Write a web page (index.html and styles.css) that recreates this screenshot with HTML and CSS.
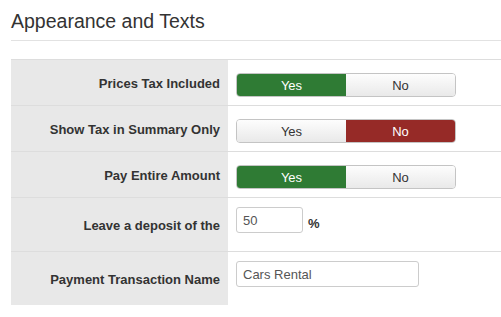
FILE: index.html
```html
<!DOCTYPE html>
<html>
<head>
<meta charset="utf-8">
<link rel="stylesheet" href="styles.css">
</head>
<body>
<div class="page">
  <h2 class="title">Appearance and Texts</h2>
  <div class="form">
    <div class="row">
      <div class="label">Prices Tax Included</div>
      <div class="field">
        <div class="toggle"><span class="opt on-yes">Yes</span><span class="opt">No</span></div>
      </div>
    </div>
    <div class="row">
      <div class="label">Show Tax in Summary Only</div>
      <div class="field">
        <div class="toggle"><span class="opt">Yes</span><span class="opt on-no">No</span></div>
      </div>
    </div>
    <div class="row">
      <div class="label">Pay Entire Amount</div>
      <div class="field">
        <div class="toggle"><span class="opt on-yes">Yes</span><span class="opt">No</span></div>
      </div>
    </div>
    <div class="row tall">
      <div class="label">Leave a deposit of the</div>
      <div class="field inputs">
        <input class="input small" type="text" value="50"><span class="unit">%</span>
      </div>
    </div>
    <div class="row tall last">
      <div class="label">Payment Transaction Name</div>
      <div class="field inputs">
        <input class="input wide" type="text" value="Cars Rental">
      </div>
    </div>
  </div>
</div>
</body>
</html>
```

FILE: styles.css
```css
html, body {
  margin: 0;
  padding: 0;
  background: #fff;
}
body {
  font-family: "Liberation Sans", Arial, sans-serif;
  color: #333;
}
.page {
  padding: 0 0 0 11px;
}
.title {
  margin: 0;
  padding-top: 9px;
  height: 31px;
  box-sizing: border-box;
  height: 41px;
  font-size: 19.5px;
  font-weight: normal;
  line-height: 24px;
  color: #333;
  border-bottom: 1px solid #e2e2e2;
}
.form {
  margin-top: 18px;
  border-top: 1px solid #ddd;
}
.row {
  display: grid;
  grid-template-columns: 217px 1fr;
  height: 45px;
  border-bottom: 1px solid #ddd;
}
.row.tall {
  height: 53px;
}
.row.last {
  border-bottom: none;
}
.label {
  background: #e8e8e8;
  display: flex;
  align-items: center;
  justify-content: flex-end;
  padding-right: 8px;
  padding-top: 2px;
  font-size: 13px;
  font-weight: bold;
  color: #333;
}
.field {
  display: flex;
  align-items: flex-start;
  padding-left: 8px;
  padding-top: 13px;
}
.field.inputs {
  padding-top: 9px;
}
.toggle {
  display: flex;
  width: 220px;
  height: 24px;
  border-radius: 4px;
  overflow: hidden;
  border: 1px solid #c4c4c4;
  box-sizing: border-box;
}
.opt {
  flex: 1;
  display: flex;
  align-items: center;
  justify-content: center;
  font-size: 13px;
  color: #333;
  background: linear-gradient(#fdfdfd, #e9e9e9);
}
.opt.on-yes {
  background: #2f7b34;
  color: #fff;
}
.opt.on-no {
  background: #962a27;
  color: #fff;
}
.input {
  box-sizing: border-box;
  height: 26px;
  border: 1px solid #ccc;
  border-radius: 3px;
  padding: 0 6px;
  font-family: "Liberation Sans", Arial, sans-serif;
  font-size: 13px;
  color: #555;
  background: #fff;
  margin: 0;
}
.input.small {
  width: 67px;
}
.input.wide {
  width: 183px;
}
.unit {
  margin-left: 5px;
  font-size: 13px;
  font-weight: bold;
  color: #333;
  padding-top: 9px;
}
```
